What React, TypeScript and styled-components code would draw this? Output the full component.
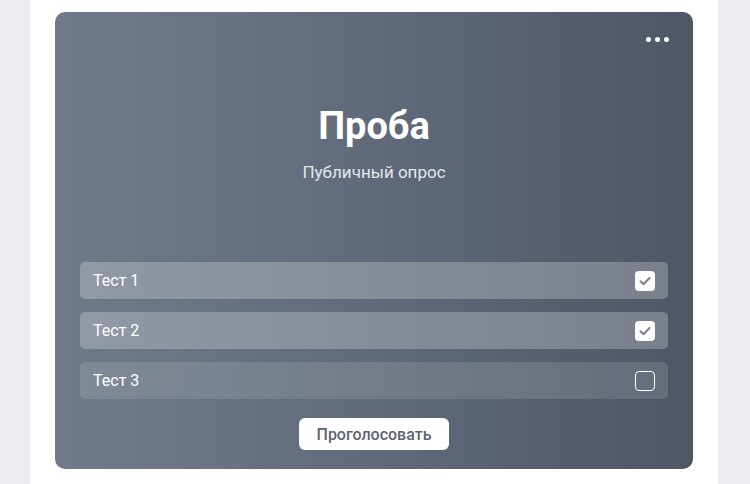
import React, { useState } from "react";
import styled, { createGlobalStyle } from "styled-components";

const GlobalStyle = createGlobalStyle`
	html, body {
		margin: 0;
		padding: 0;
		background: #ebedf0;
		font-family: Roboto, "Liberation Sans", sans-serif;
	}
`;

const Page = styled.div`
	display: flex;
	padding: 0 32px 0 30px;
	min-height: 484px;
	box-sizing: border-box;
`;

const Panel = styled.div`
	flex: 1;
	background: #fff;
	padding: 12px 25px 15px;
`;

const Card = styled.div`
	display: flex;
	flex-direction: column;
	height: 457px;
	box-sizing: border-box;
	padding: 0 25px 19px;
	border-radius: 10px;
	background: linear-gradient(90deg, #707b8a 0%, #5f6878 55%, #4f5666 100%);
	color: #fff;
`;

const TopRow = styled.div`
	display: flex;
	justify-content: flex-end;
	align-items: center;
	height: 54px;
	margin-right: -5px;
`;

const MenuButton = styled.button`
	display: flex;
	gap: 4px;
	padding: 4px;
	border: 0;
	background: none;
	cursor: pointer;
`;

const Dot = styled.span`
	width: 5px;
	height: 5px;
	border-radius: 50%;
	background: #fff;
`;

const Title = styled.h1`
	margin: 37px 0 0;
	font-size: 38px;
	line-height: 46px;
	font-weight: 700;
	text-align: center;
`;

const Subtitle = styled.div`
	margin-top: 13px;
	font-size: 17px;
	line-height: 21px;
	color: #e3e6eb;
	text-align: center;
`;

const Options = styled.div`
	display: flex;
	flex-direction: column;
	gap: 13px;
	margin-top: 79px;
`;

const Option = styled.label<{ $checked: boolean }>`
	display: flex;
	align-items: center;
	justify-content: space-between;
	height: 37px;
	padding: 0 13px;
	border-radius: 5px;
	background: ${p => (p.$checked ? "rgba(255, 255, 255, 0.24)" : "rgba(255, 255, 255, 0.12)")};
	font-size: 16px;
	cursor: pointer;
`;

const Box = styled.span<{ $checked: boolean }>`
	display: flex;
	align-items: center;
	justify-content: center;
	width: 20px;
	height: 20px;
	box-sizing: border-box;
	border-radius: 4px;
	background: ${p => (p.$checked ? "#fff" : "transparent")};
	border: ${p => (p.$checked ? "none" : "1.5px solid #fff")};
`;

const Footer = styled.div`
	display: flex;
	justify-content: center;
	margin-top: 19px;
`;

const VoteButton = styled.button`
	width: 150px;
	height: 32px;
	border: 0;
	border-radius: 6px;
	background: #fff;
	color: #5d6371;
	font-family: inherit;
	font-size: 16px;
	font-weight: 500;
	cursor: pointer;
`;

const Check = () => (
	<svg width="14" height="14" viewBox="0 0 14 14">
		<path d="M2.5 7.2l3 3 6-6.2" fill="none" stroke="#7a808c" strokeWidth="2" strokeLinecap="round" strokeLinejoin="round" />
	</svg>
);

export default function App() {
	const [checked, setChecked] = useState([true, true, false]);

	function toggle(i: number) {
		setChecked(c => c.map((v, j) => (j === i ? !v : v)));
	}

	return (
		<>
			<GlobalStyle />
			<Page>
				<Panel>
					<Card>
						<TopRow>
							<MenuButton>
								<Dot />
								<Dot />
								<Dot />
							</MenuButton>
						</TopRow>
						<Title>Проба</Title>
						<Subtitle>Публичный опрос</Subtitle>
						<Options>
							{["Тест 1", "Тест 2", "Тест 3"].map((t, i) => (
								<Option key={t} $checked={checked[i]} onClick={() => toggle(i)}>
									{t}
									<Box $checked={checked[i]}>{checked[i] && <Check />}</Box>
								</Option>
							))}
						</Options>
						<Footer>
							<VoteButton>Проголосовать</VoteButton>
						</Footer>
					</Card>
				</Panel>
			</Page>
		</>
	);
}
